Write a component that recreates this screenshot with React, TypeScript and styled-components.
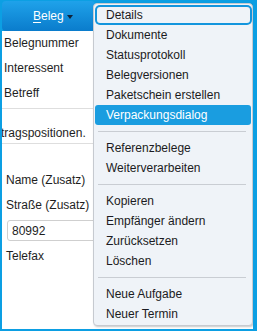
import React from "react";
import styled, { createGlobalStyle } from "styled-components";

const Global = createGlobalStyle`
  html, body { margin: 0; padding: 0; background: #ffffff; }
  body { font-family: "Liberation Sans", Arial, sans-serif; font-size: 12px; color: #1e1e1e; }
  * { box-sizing: border-box; }
`;

const Frame = styled.div`
  position: relative;
  width: 257px;
  height: 331px;
  overflow: hidden;
  background: #ffffff;
  border-left: 2px solid #0c9fe3;
  border-right: 4px solid #0c9fe3;
  border-bottom: 2px solid #0c9fe3;
  display: flex;
  flex-direction: column;
`;

const Header = styled.div`
  height: 31px;
  flex: none;
  background: #0c9fe3;
  padding-top: 1px;
  display: flex;
`;

const MenuButton = styled.div`
  width: 93px;
  height: 30px;
  border-radius: 4px 4px 4px 4px;
  background: linear-gradient(#1fa2ea, #0a7ccc);
  display: flex;
  align-items: center;
  padding-left: 31px;
  gap: 3px;
  color: #ffffff;
  font-size: 12px;
`;

const Label = styled.span`
  line-height: 14px;
  u { text-decoration: underline; text-underline-offset: 2px; }
`;

const Caret = styled.span`
  width: 0;
  height: 0;
  border-left: 3.5px solid transparent;
  border-right: 3.5px solid transparent;
  border-top: 4px solid #10233a;
  margin-top: 1px;
`;

const Body = styled.div`
  flex: 1;
  display: flex;
  flex-direction: column;
`;

const Section = styled.div<{ $pt: number; $pb: number; $pl: number; $gap: number }>`
  display: flex;
  flex-direction: column;
  padding: ${(p) => p.$pt}px 0 ${(p) => p.$pb}px ${(p) => p.$pl}px;
  gap: ${(p) => p.$gap}px;
  border-bottom: 1px solid #dedede;
`;

const OpenSection = styled(Section)`
  border-bottom: none;
`;

const Field = styled.div`
  height: 24px;
  display: flex;
  align-items: center;
  white-space: nowrap;
`;

const Note = styled.div`
  line-height: 15px;
  white-space: nowrap;
  margin-left: -1px;
`;

const Input = styled.div`
  height: 21px;
  width: 160px;
  margin: 2px 0 2px 1px;
  border: 1px solid #cfcfcf;
  border-radius: 3px;
  display: flex;
  align-items: center;
  padding-left: 4px;
`;

const Menu = styled.div`
  position: absolute;
  left: 91px;
  top: 3px;
  width: 160px;
  padding: 1px;
  background: #eff3f8;
  border: 1px solid #c6cad0;
  border-radius: 4px;
  box-shadow: 1px 1px 2px rgba(0, 0, 0, 0.22);
  display: flex;
  flex-direction: column;
`;

const Item = styled.div<{ $focus?: boolean; $active?: boolean }>`
  height: 20px;
  display: flex;
  align-items: center;
  padding-left: 11px;
  white-space: nowrap;
  color: ${(p) => (p.$active ? "#ffffff" : "#1b1b22")};
  background: ${(p) => (p.$active ? "#1a9de0" : "transparent")};
  border-radius: ${(p) => (p.$focus ? 5 : 3)}px;
  box-shadow: ${(p) => (p.$focus ? "inset 0 0 0 2px #1395dd" : "none")};
  margin-right: ${(p) => (p.$focus ? -1 : 0)}px;
`;

const Sep = styled.div`
  height: 1px;
  background: #c9cdd3;
  margin: 6px 5px 6px 3px;
`;

type Entry = { label: string; focus?: boolean; active?: boolean } | "sep";

const entries: Entry[] = [
  { label: "Details", focus: true },
  { label: "Dokumente" },
  { label: "Statusprotokoll" },
  { label: "Belegversionen" },
  { label: "Paketschein erstellen" },
  { label: "Verpackungsdialog", active: true },
  "sep",
  { label: "Referenzbelege" },
  { label: "Weiterverarbeiten" },
  "sep",
  { label: "Kopieren" },
  { label: "Empfänger ändern" },
  { label: "Zurücksetzen" },
  { label: "Löschen" },
  "sep",
  { label: "Neue Aufgabe" },
  { label: "Neuer Termin" },
];

export default function App() {
  return (
    <>
      <Global />
      <Frame>
        <Header>
          <MenuButton>
            <Label>
              <u>B</u>eleg
            </Label>
            <Caret />
          </MenuButton>
        </Header>
        <Body>
          <Section $pt={0} $pb={3} $pl={2} $gap={1}>
            <Field>Belegnummer</Field>
            <Field>Interessent</Field>
            <Field>Betreff</Field>
          </Section>
          <Section $pt={17} $pb={2} $pl={0} $gap={0}>
            <Note>tragspositionen.</Note>
          </Section>
          <OpenSection $pt={24} $pb={0} $pl={4} $gap={1}>
            <Field>Name (Zusatz)</Field>
            <Field>Straße (Zusatz)</Field>
            <Input>80992</Input>
            <Field>Telefax</Field>
          </OpenSection>
        </Body>
        <Menu>
          {entries.map((e, i) =>
            e === "sep" ? (
              <Sep key={i} />
            ) : (
              <Item key={i} $focus={e.focus} $active={e.active}>
                {e.label}
              </Item>
            )
          )}
        </Menu>
      </Frame>
    </>
  );
}
